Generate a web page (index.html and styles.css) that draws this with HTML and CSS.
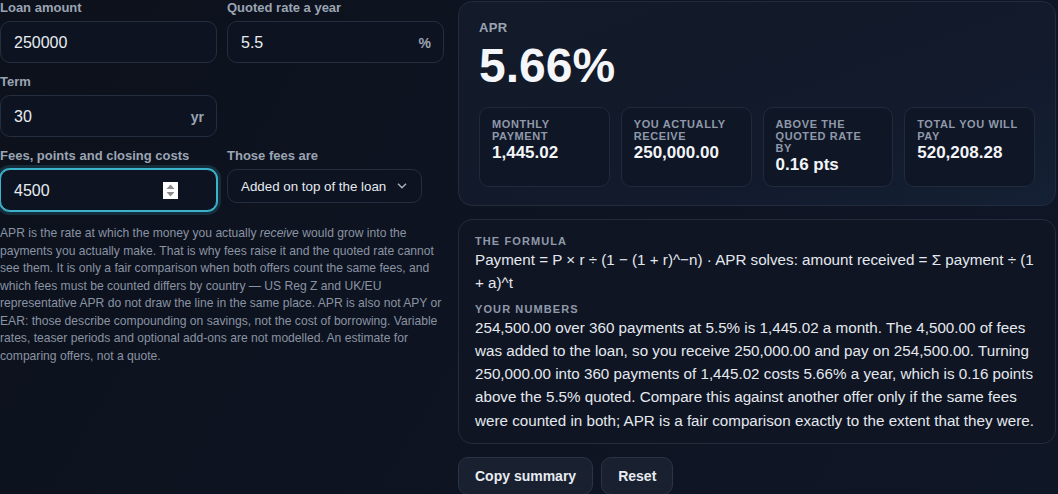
FILE: index.html
```html
<!DOCTYPE html>
<html lang="en">
<head>
<meta charset="utf-8">
<title>APR calculator</title>
<link rel="stylesheet" href="styles.css">
</head>
<body>
<main class="page">
  <section class="form">
    <div class="fieldset">
      <label class="label">Loan amount</label>
      <div class="field"><span class="value">250000</span></div>
    </div>
    <div class="fieldset">
      <label class="label">Quoted rate a year</label>
      <div class="field"><span class="value">5.5</span><span class="suffix">%</span></div>
    </div>
    <div class="fieldset">
      <label class="label">Term</label>
      <div class="field"><span class="value">30</span><span class="suffix">yr</span></div>
    </div>
    <div class="fieldset empty"></div>
    <div class="fieldset">
      <label class="label">Fees, points and closing costs</label>
      <div class="field focused"><span class="value">4500</span>
        <svg class="spin" width="15" height="17" viewBox="0 0 15 17"><rect width="15" height="17" fill="#ffffff"/><polygon points="3.5,7 7.5,2.5 11.5,7" fill="#8c8c8c"/><polygon points="3.5,10 7.5,14.5 11.5,10" fill="#8c8c8c"/></svg>
      </div>
    </div>
    <div class="fieldset">
      <label class="label">Those fees are</label>
      <div class="select"><span>Added on top of the loan</span>
        <svg width="10" height="6" viewBox="0 0 10 6"><polyline points="1,0.8 5,4.8 9,0.8" fill="none" stroke="#aab3c2" stroke-width="1.4"/></svg>
      </div>
    </div>
    <p class="note">APR is the rate at which the money you actually <em>receive</em> would grow into the payments you actually make. That is why fees raise it and the quoted rate cannot see them. It is only a fair comparison when both offers count the same fees, and which fees must be counted differs by country — US Reg Z and UK/EU representative APR do not draw the line in the same place. APR is also not APY or EAR: those describe compounding on savings, not the cost of borrowing. Variable rates, teaser periods and optional add-ons are not modelled. An estimate for comparing offers, not a quote.</p>
  </section>

  <section class="results">
    <div class="panel summary">
      <div class="apr-label">APR</div>
      <div class="apr-value">5.66%</div>
      <div class="cards">
        <div class="card"><div class="card-label">Monthly payment</div><div class="card-value">1,445.02</div></div>
        <div class="card"><div class="card-label">You actually receive</div><div class="card-value">250,000.00</div></div>
        <div class="card"><div class="card-label">Above the quoted rate by</div><div class="card-value">0.16 pts</div></div>
        <div class="card"><div class="card-label">Total you will pay</div><div class="card-value">520,208.28</div></div>
      </div>
    </div>
    <div class="panel explain">
      <div class="sec-label">The formula</div>
      <p class="sec-text">Payment = P × r ÷ (1 − (1 + r)^−n) · APR solves: amount received = Σ payment ÷ (1 + a)^t</p>
      <div class="sec-label second">Your numbers</div>
      <p class="sec-text">254,500.00 over 360 payments at 5.5% is 1,445.02 a month. The 4,500.00 of fees was added to the loan, so you receive 250,000.00 and pay on 254,500.00. Turning 250,000.00 into 360 payments of 1,445.02 costs 5.66% a year, which is 0.16 points above the 5.5% quoted. Compare this against another offer only if the same fees were counted in both; APR is a fair comparison exactly to the extent that they were.</p>
    </div>
    <div class="actions">
      <button class="btn">Copy summary</button>
      <button class="btn">Reset</button>
    </div>
  </section>
</main>
</body>
</html>
```

FILE: styles.css
```css
* { box-sizing: border-box; }
html, body { margin: 0; padding: 0; }
body {
  font-family: "Liberation Sans", Arial, sans-serif;
  color: #e6eaf0;
  background: linear-gradient(120deg, #0c111b 0%, #0e1422 55%, #0f1626 100%);
  min-height: 494px;
  overflow: hidden;
}
.page {
  display: grid;
  grid-template-columns: 444px 598px;
  column-gap: 14px;
  align-items: start;
}
.form {
  display: grid;
  grid-template-columns: 217px 217px;
  column-gap: 10px;
  row-gap: 11px;
}
.label {
  display: block;
  font-size: 13px;
  line-height: 16px;
  font-weight: 700;
  color: #9ba4b3;
  margin-bottom: 5px;
}
.field {
  display: flex;
  align-items: center;
  height: 42px;
  padding: 1px 12px 0 13px;
  border: 1px solid #252e3f;
  border-radius: 10px;
  background: #0d1320;
}
.field .value {
  flex: 1;
  font-size: 16px;
  color: #e8ecf2;
}
.suffix {
  font-size: 14px;
  font-weight: 700;
  color: #9ba4b3;
}
.field.focused {
  border-color: #3cb2cb;
  box-shadow: 0 0 0 1px #3cb2cb, 0 0 0 4px rgba(60, 178, 203, 0.18);
}
.spin { margin-right: 26px; display: block; }
.select {
  display: inline-flex;
  align-items: center;
  gap: 11px;
  height: 34px;
  padding: 0 14px 0 13px;
  border: 1px solid #252e3f;
  border-radius: 10px;
  background: #0d1320;
  font-size: 13.33px;
  color: #e6eaf0;
}
.select svg { display: block; }
.note {
  grid-column: 1 / 3;
  margin: 3px 0 0;
  font-size: 12.12px;
  line-height: 17.5px;
  color: #8a93a3;
}
.results {
  display: flex;
  flex-direction: column;
  gap: 13px;
  padding-top: 1px;
}
.panel {
  border: 1px solid #232c3d;
  border-radius: 14px;
  background: linear-gradient(160deg, #131a29 0%, #121a2b 60%, #142034 100%);
}
.summary { padding: 18px 20px 18px; }
.apr-label {
  font-size: 13px;
  line-height: 16px;
  font-weight: 700;
  letter-spacing: 0.4px;
  color: #9ba4b3;
}
.apr-value {
  margin-top: 6px;
  font-size: 48px;
  line-height: 48px;
  font-weight: 700;
  color: #f4f6f9;
}
.cards {
  margin-top: 17px;
  display: grid;
  grid-template-columns: repeat(4, 1fr);
  gap: 11px;
}
.card {
  border: 1px solid #212a3b;
  border-radius: 10px;
  background: #0f1625;
  padding: 10px 12px 10px;
}
.card-label {
  font-size: 11px;
  line-height: 12px;
  font-weight: 700;
  letter-spacing: 0.6px;
  text-transform: uppercase;
  color: #8f99aa;
}
.card-value {
  font-size: 17px;
  line-height: 22px;
  font-weight: 700;
  color: #f2f4f8;
}
.explain {
  padding: 15px 16px 11px;
  background: #0f1523;
}
.sec-label {
  font-size: 11px;
  line-height: 13px;
  font-weight: 700;
  letter-spacing: 1.1px;
  text-transform: uppercase;
  color: #8f99aa;
}
.sec-label.second { margin-top: 8px; }
.sec-text {
  margin: 0;
  font-size: 15.2px;
  line-height: 23.25px;
  color: #e4e8ee;
}
.actions {
  display: flex;
  gap: 8px;
}
.btn {
  font-family: "Liberation Sans", Arial, sans-serif;
  font-size: 14px;
  line-height: 16px;
  font-weight: 700;
  color: #e8ecf2;
  background: #192130;
  border: 1px solid #2a3445;
  border-radius: 10px;
  padding: 10px 16px;
}
```
